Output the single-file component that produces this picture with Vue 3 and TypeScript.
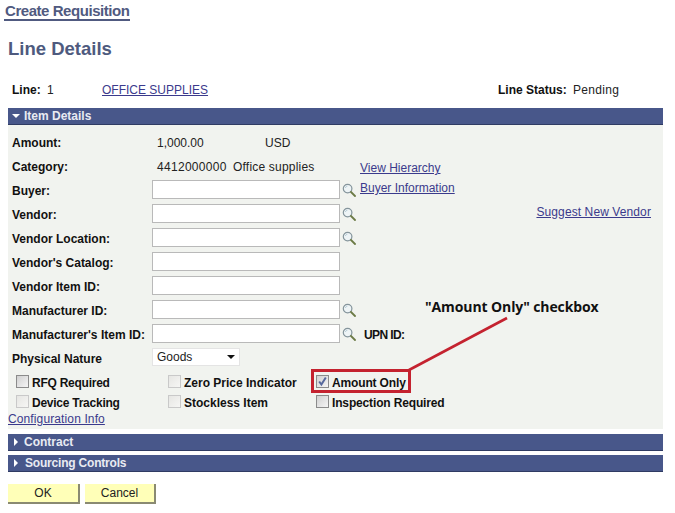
<script setup lang="ts">
interface FieldRow { label: string; lookup: boolean; link?: string; farLink?: string; extra?: string }
const rows: FieldRow[] = [
  { label: 'Buyer:', lookup: true, link: 'Buyer Information' },
  { label: 'Vendor:', lookup: true, farLink: 'Suggest New Vendor' },
  { label: 'Vendor Location:', lookup: true },
  { label: "Vendor's Catalog:", lookup: false },
  { label: 'Vendor Item ID:', lookup: false },
  { label: 'Manufacturer ID:', lookup: true },
  { label: "Manufacturer's Item ID:", lookup: true, extra: 'UPN ID:' },
]
const checks = [
  [
    { label: 'RFQ Required', dark: true, checked: false, cls: 'c1' },
    { label: 'Zero Price Indicator', dark: false, checked: false, cls: 'c2' },
    { label: 'Amount Only', dark: true, checked: true, cls: 'c3' },
  ],
  [
    { label: 'Device Tracking', dark: false, checked: false, cls: 'c1' },
    { label: 'Stockless Item', dark: false, checked: false, cls: 'c2' },
    { label: 'Inspection Required', dark: true, checked: false, cls: 'c3' },
  ],
]
</script>

<template>
  <div class="page">
    <div class="tab-row"><span class="tab">Create Requisition</span></div>
    <h1 class="title">Line Details</h1>

    <div class="line-row">
      <b class="line-label">Line:</b>
      <span class="line-no">1</span>
      <a class="link office">OFFICE SUPPLIES</a>
      <b class="status-label">Line Status:</b>
      <span class="pending">Pending</span>
    </div>

    <div class="bar">
      <svg class="tri" width="8" height="8" viewBox="0 0 8 8"><path d="M0 2h8L4 6z" fill="#fff" /></svg>
      <span>Item Details</span>
    </div>

    <section class="panel">
      <div class="row">
        <b class="label">Amount:</b>
        <span class="amount">1,000.00</span>
        <span class="usd">USD</span>
      </div>
      <div class="row">
        <b class="label">Category:</b>
        <span class="code">4412000000</span>
        <span class="catname">Office supplies</span>
        <a class="link hier">View Hierarchy</a>
      </div>
      <div v-for="r in rows" :key="r.label" class="row">
        <b class="label">{{ r.label }}</b>
        <span class="input"></span>
        <svg v-if="r.lookup" class="lens" width="14" height="14" viewBox="0 0 14 14">
          <circle cx="5.6" cy="5.6" r="4.3" fill="#eef4f6" stroke="#84949b" stroke-width="1.2" />
          <path d="M3.2 5a2.8 2.8 0 0 1 2.2-1.8" fill="none" stroke="#b8cfd8" stroke-width="1" />
          <path d="M9 9l4 4" stroke="#6b7a45" stroke-width="1.8" stroke-linecap="round" />
        </svg>
        <a v-if="r.link" class="link side">{{ r.link }}</a>
        <a v-if="r.farLink" class="link far">{{ r.farLink }}</a>
        <b v-if="r.extra" class="extra">{{ r.extra }}</b>
      </div>
      <div class="row">
        <b class="label">Physical Nature</b>
        <span class="select">
          <span>Goods</span>
          <svg width="8" height="4" viewBox="0 0 8 4"><path d="M0 0h8L4 4z" fill="#111" /></svg>
        </span>
      </div>
      <div class="checks">
        <div v-for="(line, i) in checks" :key="i" class="check-row">
          <label v-for="c in line" :key="c.label" class="check" :class="c.cls">
            <span class="box" :class="{ dark: c.dark }">
              <svg v-if="c.checked" width="11" height="11" viewBox="0 0 11 11">
                <path d="M2.2 5.5l2.2 3L8.8 1.5" fill="none" stroke="#56689c" stroke-width="2" />
              </svg>
            </span>
            <b>{{ c.label }}</b>
          </label>
        </div>
      </div>
      <a class="link config">Configuration Info</a>
    </section>

    <div class="bar contract">
      <svg class="tri" width="8" height="8" viewBox="0 0 8 8"><path d="M2 0l4 4-4 4z" fill="#fff" /></svg>
      <span>Contract</span>
    </div>
    <div class="bar sourcing">
      <svg class="tri" width="8" height="8" viewBox="0 0 8 8"><path d="M2 0l4 4-4 4z" fill="#fff" /></svg>
      <span>Sourcing Controls</span>
    </div>

    <div class="buttons">
      <button class="btn ok" type="button">OK</button>
      <button class="btn cancel" type="button">Cancel</button>
    </div>

    <div class="note">"Amount Only" checkbox</div>
    <div class="redbox"></div>
    <svg class="arrow" width="675" height="513" viewBox="0 0 675 513">
      <path d="M409 370L507 318" stroke="#c4222f" stroke-width="2.6" />
    </svg>
  </div>
</template>

<style>
html, body { margin: 0; background: #fff; }
</style>

<style scoped>
.page {
  position: relative;
  width: 675px;
  height: 513px;
  overflow: hidden;
  font-family: "Liberation Sans", Arial, sans-serif;
  font-size: 12px;
  color: #222;
  background: #fff;
}
.tab-row { padding: 3px 0 0 4px; height: 19px; }
.tab {
  display: inline-block;
  height: 16px;
  line-height: 16px;
  padding: 0 1px;
  font-size: 15px;
  letter-spacing: -0.03em;
  font-weight: bold;
  color: #505a80;
  border-bottom: 2px solid #505a80;
}
.title {
  margin: 16px 0 0 8px;
  height: 22px;
  line-height: 22px;
  font-size: 18.5px;
  font-weight: bold;
  color: #4e5a7e;
}
.line-row {
  display: flex;
  align-items: center;
  height: 16px;
  margin-top: 22px;
  padding-left: 12px;
}
.line-label { width: 35px; color: #111; }
.line-no { width: 55px; }
.office { width: 396px; }
.status-label { width: 75px; color: #111; }
.pending { letter-spacing: 0.3px; }
.link { color: #3b3a8c; text-decoration: underline; }
.bar {
  display: flex;
  align-items: center;
  height: 17px;
  width: 655px;
  margin-left: 8px;
  background: #48578a;
  border-bottom: 1px solid #2f3b63;
  box-sizing: border-box;
  color: #e9ebf2;
  font-weight: bold;
}
.line-row + .bar { margin-top: 10px; }
.tri { margin: 0 4px; flex: none; }
.panel {
  width: 655px;
  height: 304px;
  margin-left: 8px;
  padding: 6px 0 0 4px;
  box-sizing: border-box;
  background: #f1f3ef;
  display: flex;
  flex-direction: column;
}
.row {
  position: relative;
  display: flex;
  align-items: center;
  height: 24px;
  flex: none;
}
.label { width: 140px; color: #111; flex: none; }
.amount { width: 113px; padding-left: 5px; box-sizing: border-box; flex: none; }
.code { width: 81px; padding-left: 5px; box-sizing: border-box; flex: none; letter-spacing: 0.3px; }
.catname { width: 127px; flex: none; letter-spacing: 0.2px; }
.hier { flex: none; margin-top: 2px; }
.input {
  width: 188px;
  height: 19px;
  box-sizing: border-box;
  background: #fff;
  border: 1px solid #b9b9b9;
  margin-top: -4px;
  flex: none;
}
.lens { margin: -2px 0 0 2px; flex: none; }
.side { margin: -6px 0 0 4px; }
.far { position: absolute; right: 12px; top: 2px; letter-spacing: 0.1px; }
.extra { margin-left: 8px; color: #111; letter-spacing: -0.6px; }
.select {
  width: 88px;
  height: 18px;
  box-sizing: border-box;
  background: #fff;
  border: 1px solid #e4e4e4;
  margin-top: -5px;
  padding: 0 4px 0 4px;
  display: flex;
  align-items: center;
  justify-content: space-between;
  flex: none;
}
.checks { margin-top: 2px; }
.check-row {
  height: 20px;
  display: flex;
  align-items: center;
  color: #111;
}
.check { display: flex; align-items: center; flex: none; }
.c1 { width: 156px; padding-left: 4px; box-sizing: border-box; letter-spacing: -0.25px; }
.c2 { width: 148px; }
.c3 { letter-spacing: -0.15px; }
.box {
  width: 13px;
  height: 13px;
  box-sizing: border-box;
  border: 1px solid #c9c9c9;
  background: linear-gradient(135deg, #e6e6e3, #f6f6f4);
  margin: -4px 3px 0 0;
  display: flex;
  align-items: center;
  justify-content: center;
  flex: none;
}
.box.dark { border-color: #8b8b8b; background: linear-gradient(135deg, #d0d0d0, #f5f5f5); }
.config { margin: -1px 0 0 -4px; line-height: 14px; letter-spacing: 0.12px; }
.contract { margin-top: 5px; }
.sourcing { margin-top: 4px; }
.sourcing span { margin-left: 1px; letter-spacing: -0.2px; }
.buttons { display: flex; gap: 5px; margin: 12px 0 0 8px; }
.btn {
  height: 18px;
  padding: 0;
  font: 12px "Liberation Sans", Arial, sans-serif;
  color: #222;
  background: #ffffb8;
  border: 0;
  border-right: 2px solid #8a8a72;
  border-bottom: 2px solid #8a8a72;
  box-sizing: content-box;
  text-align: center;
}
.ok { width: 70px; }
.cancel { width: 69px; }
.note {
  position: absolute;
  left: 425px;
  top: 298px;
  font-family: "Open Sans", sans-serif;
  font-size: 14px;
  line-height: 17px;
  letter-spacing: -0.1px;
  font-weight: bold;
  color: #111;
  white-space: nowrap;
}
.redbox {
  position: absolute;
  left: 311px;
  top: 369px;
  width: 100px;
  height: 24px;
  box-sizing: border-box;
  border: 3px solid #c4222f;
}
.arrow { position: absolute; left: 0; top: 0; pointer-events: none; }
</style>
